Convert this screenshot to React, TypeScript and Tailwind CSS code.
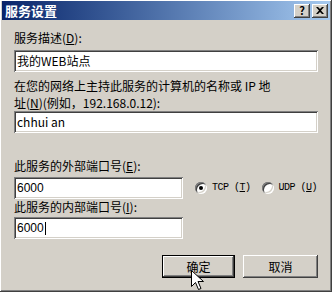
const FONT = "font-['Noto_Sans_CJK_SC','Noto_Sans',sans-serif]";

// classic win2k bevels
const RAISED =
  "shadow-[inset_-1px_-1px_#404040,inset_1px_1px_#ffffff,inset_-2px_-2px_#808080,inset_2px_2px_#d4d0c8]";
const SUNKEN =
  "shadow-[inset_1px_1px_#808080,inset_-1px_-1px_#ffffff,inset_2px_2px_#404040,inset_-2px_-2px_#d4d0c8]";

function TitleButton({ children }: { children: React.ReactNode }) {
  return (
    <div
      className={`grid h-[14px] w-[16px] place-items-center bg-[#d4d0c8] text-[11px] font-bold leading-none text-black ${RAISED}`}
    >
      {children}
    </div>
  );
}

function TextBox({ value, caret, className = "" }: { value: string; caret?: boolean; className?: string }) {
  return (
    <div className={`flex h-[22px] items-center bg-white pl-[3px] text-[12px] leading-none text-black ${SUNKEN} ${className}`}>
      <span>{value}</span>
      {caret && <span className="ml-px h-[13px] w-px bg-black" />}
    </div>
  );
}

function RadioLabel({ checked, label, hot }: { checked?: boolean; label: string; hot: string }) {
  return (
    <div className="flex items-center gap-[5px]">
      <span className="grid size-[12px] place-items-center rounded-full bg-white shadow-[inset_1px_1px_#808080,inset_-1px_-1px_#ffffff,inset_2px_2px_#404040,inset_-2px_-2px_#d4d0c8]">
        {checked && <span className="size-[4px] rounded-full bg-black" />}
      </span>
      <span className="font-['Liberation_Mono',monospace] text-[10px] leading-none tracking-[-0.5px]">
        {label} (<u>{hot}</u>)
      </span>
    </div>
  );
}

function PushButton({ label, isDefault }: { label: string; isDefault?: boolean }) {
  return (
    <div className={isDefault ? "border border-black" : ""}>
      <div
        className={`grid place-items-center bg-[#d4d0c8] text-[12px] leading-none ${RAISED} ${
          isDefault ? "h-[21px] w-[71px]" : "h-[23px] w-[75px]"
        }`}
      >
        {label}
      </div>
    </div>
  );
}

export default function App() {
  return (
    <div
      className={`relative flex h-[292px] w-[332px] flex-col bg-[#d4d0c8] px-[2px] pt-px text-black ${FONT} ${RAISED}`}
    >
      {/* title bar */}
      <div className="flex h-[19px] items-center justify-between bg-gradient-to-r from-[#0a246a] to-[#a6caf0] pl-[3px] pr-[2px]">
        <span className="text-[13px] font-bold leading-none text-white">服务设置</span>
        <div className="flex gap-[2px]">
          <TitleButton>?</TitleButton>
          <TitleButton>
            <svg width="8" height="7" viewBox="0 0 8 7">
              <path d="M0 0h2l2 2 2-2h2L5 3.5 8 7H6L4 5 2 7H0l3-3.5z" fill="#000" />
            </svg>
          </TitleButton>
        </div>
      </div>

      <div className="flex flex-col px-[12px] text-[12px]">
        <div className="mt-[11px] leading-[14px]">
          服务描述(<u>D</u>):
        </div>
        <TextBox className="mt-[5px]" value="我的WEB站点" />

        <div className="mt-[5px] leading-[17px]">
          <div>在您的网络上主持此服务的计算机的名称或 IP 地</div>
          <div>
            址(<u>N</u>)(例如，192.168.0.12):
          </div>
        </div>
        <TextBox value="chhui an" />

        <div className="mt-[26px] leading-[14px]">
          此服务的外部端口号(<u>E</u>):
        </div>
        <div className="mt-[4px] flex items-center">
          <TextBox className="w-[169px] font-['Liberation_Sans',sans-serif]" value="6000" />
          <div className="ml-[12px] flex items-center gap-[11px]">
            <RadioLabel checked label="TCP" hot="T" />
            <RadioLabel label="UDP" hot="U" />
          </div>
        </div>

        <div className="mt-px leading-[14px]">
          此服务的内部端口号(<u>I</u>):
        </div>
        <TextBox className="mt-[3px] w-[169px] font-['Liberation_Sans',sans-serif]" value="6000" caret />

        <div className="mt-[16px] flex justify-end gap-[8px]">
          <PushButton label="确定" isDefault />
          <PushButton label="取消" />
        </div>
      </div>

      {/* mouse pointer */}
      <svg className="absolute left-[191px] top-[270px]" width="13" height="21" viewBox="0 0 13 21">
        <path d="M0.5 0.5v16l4-4 3 7 2.5-1-3-7h5.5z" fill="#fff" stroke="#000" strokeWidth="1" />
      </svg>
    </div>
  );
}
